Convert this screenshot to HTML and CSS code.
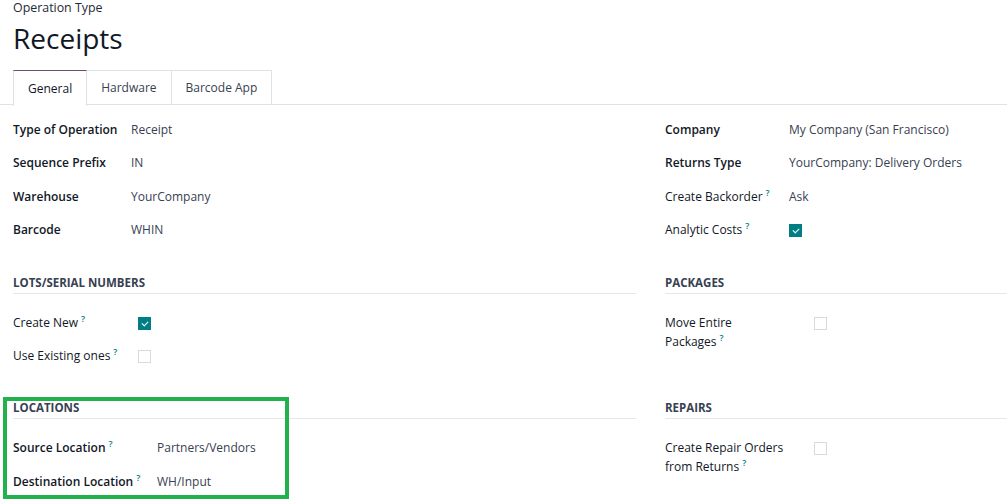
FILE: index.html
```html
<!DOCTYPE html>
<html lang="en">
<head>
<meta charset="utf-8">
<title>Receipts</title>
<link rel="stylesheet" href="styles.css">
</head>
<body>
<div class="page">
  <div class="head">
    <div class="subtitle">Operation Type</div>
    <h1 class="title">Receipts</h1>
  </div>

  <div class="tabs">
    <div class="tab active">General</div>
    <div class="tab">Hardware</div>
    <div class="tab">Barcode App</div>
  </div>

  <div class="sheet">
    <div class="fields lw-main-l">
      <div class="lbl">Type of Operation</div><div class="val">Receipt</div>
      <div class="lbl">Sequence Prefix</div><div class="val">IN</div>
      <div class="lbl">Warehouse</div><div class="val">YourCompany</div>
      <div class="lbl">Barcode</div><div class="val">WHIN</div>
    </div>

    <div class="fields lw-main-r">
      <div class="lbl">Company</div><div class="val">My Company (San Francisco)</div>
      <div class="lbl">Returns Type</div><div class="val">YourCompany: Delivery Orders</div>
      <div class="lbl lbl-light">Create Backorder<sup class="help">?</sup></div><div class="val">Ask</div>
      <div class="lbl lbl-light">Analytic Costs<sup class="help">?</sup></div><div class="val"><span class="cb checked"></span></div>
    </div>

    <div class="section">
      <div class="sec-title">LOTS/SERIAL NUMBERS</div>
      <div class="fields lw-lots">
        <div class="lbl lbl-light">Create New<sup class="help">?</sup></div><div class="val"><span class="cb checked"></span></div>
        <div class="lbl lbl-light">Use Existing ones<sup class="help">?</sup></div><div class="val"><span class="cb"></span></div>
      </div>
    </div>

    <div class="section">
      <div class="sec-title">PACKAGES</div>
      <div class="fields lw-wrap">
        <div class="lbl lbl-light">Move Entire<br>Packages<sup class="help">?</sup></div><div class="val"><span class="cb"></span></div>
      </div>
    </div>

    <div class="section">
      <div class="sec-title">LOCATIONS</div>
      <div class="fields lw-loc">
        <div class="lbl">Source Location<sup class="help">?</sup></div><div class="val">Partners/Vendors</div>
        <div class="lbl">Destination Location<sup class="help">?</sup></div><div class="val">WH/Input</div>
      </div>
    </div>

    <div class="section">
      <div class="sec-title">REPAIRS</div>
      <div class="fields lw-wrap">
        <div class="lbl lbl-light">Create Repair Orders<br>from Returns<sup class="help">?</sup></div><div class="val"><span class="cb"></span></div>
      </div>
    </div>
  </div>

  <div class="highlight"></div>
</div>
</body>
</html>
```

FILE: styles.css
```css
html, body {
  margin: 0;
  padding: 0;
  overflow: hidden;
  background: #ffffff;
}

body {
  font-family: "Open Sans", "Noto Sans", "Liberation Sans", sans-serif;
  font-size: 12px;
  color: #374151;
}

.page {
  position: relative;
  width: 1007px;
  height: 500px;
  overflow: hidden;
}

.head {
  padding: 0 13px;
}

.subtitle {
  font-size: 12.4px;
  line-height: 16px;
  color: #1f2937;
  font-weight: 500;
}

.title {
  margin: 0;
  font-size: 28px;
  font-weight: 400;
  line-height: 40px;
  color: #111827;
  padding-top: 2px;
}

.tabs {
  display: flex;
  margin-top: 12px;
  padding-left: 13px;
  border-bottom: 1px solid #dee2e6;
  height: 34px;
}

.tab {
  display: flex;
  align-items: center;
  justify-content: center;
  padding: 0 14px;
  border: 1px solid #dee2e6;
  border-bottom: none;
  margin-right: -1px;
  color: #374151;
  font-size: 12px;
  background: #ffffff;
}

.tab.active {
  border-top-color: #714b67;
  color: #111827;
  position: relative;
  margin-bottom: -1px;
  height: 35px;
}

.sheet {
  display: grid;
  grid-template-columns: 623px 623px;
  column-gap: 29px;
  align-items: start;
  padding: 8px 13px 0;
}

.fields {
  display: grid;
  grid-template-columns: var(--lw) 1fr;
  align-items: start;
}

.lw-main-l { --lw: 118px; }
.lw-main-r { --lw: 124px; }
.lw-lots { --lw: 125px; }
.lw-loc { --lw: 144px; }
.lw-wrap { --lw: 149px; }

.lbl,
.val {
  padding: 7px 0;
  line-height: 19.4px;
  white-space: nowrap;
}

.lw-wrap .lbl {
  line-height: 19px;
}

.lbl {
  color: #111827;
  font-weight: 600;
}

.lbl-light {
  font-weight: 500;
}

.val {
  color: #374151;
}

.help {
  font-size: 9px;
  color: #017e84;
  font-weight: 600;
  margin-left: 3px;
  vertical-align: top;
  line-height: 12px;
}

.cb {
  display: block;
  box-sizing: border-box;
  width: 13px;
  height: 13px;
  margin-top: 4px;
  border: 1px solid #d8dadd;
  background: #ffffff;
  position: relative;
}

.cb.checked {
  background: #017e84;
  border-color: #017e84;
}

.cb.checked::after {
  content: "";
  position: absolute;
  left: 3.5px;
  top: 2px;
  width: 3px;
  height: 5px;
  border: solid #ffffff;
  border-width: 0 1.6px 1.6px 0;
  transform: rotate(45deg);
}

.section {
  margin-top: 27px;
}

.sec-title {
  font-size: 11.5px;
  font-weight: 700;
  color: #374151;
  line-height: 18px;
  border-bottom: 1px solid #e5e7eb;
  padding-bottom: 1px;
}

.section .fields {
  margin-top: 12px;
}

.highlight {
  position: absolute;
  left: 3px;
  top: 397px;
  width: 286px;
  height: 102px;
  box-sizing: border-box;
  border: 4px solid #22b14c;
  pointer-events: none;
}
```
